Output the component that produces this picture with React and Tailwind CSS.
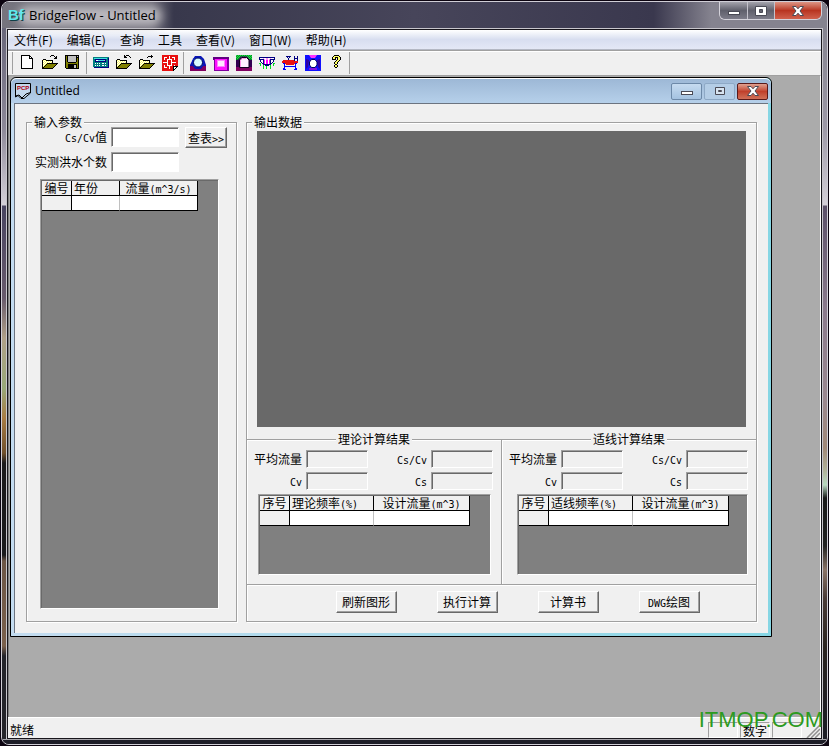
const PALETTE = {
  k: '#000000', w: '#ffffff', y: '#ffff66', o: '#808000', g: '#c0c0c0', t: '#008080',
  c: '#40e0e0', r: '#e81010', b: '#0000ff', n: '#000080', m: '#ff00ff', p: '#800060', l: '#00d820', h: '#ff90ff',
};

const FOLDER = [
  '.kkk............',
  'kywykkkkkkk.....',
  'kwywywywywk.....',
  'kywywywywyk.....',
  'kwywykkkkkkkkkkk',
  'kywykoooooooook.',
  'kwykoooooooook..',
  'kykoooooooook...',
  'kkoooooooook....',
  'kkkkkkkkkkk.....',
];

const NEW_ART = [
  '..kkkkkkkkk.....',
  '..kwwwwwwwkk....',
  '..kwwwwwwwkwk...',
  '..kwwwwwwwkkkk..',
  '..kwwwwwwwwwwk..',
  '..kwwwwwwwwwwk..',
  '..kwwwwwwwwwwk..',
  '..kwwwwwwwwwwk..',
  '..kwwwwwwwwwwk..',
  '..kwwwwwwwwwwk..',
  '..kwwwwwwwwwwk..',
  '..kwwwwwwwwwwk..',
  '..kwwwwwwwwwwk..',
  '..kkkkkkkkkkkk..',
];

const OPEN_ART = ['.........kkk....', '........k...k.k.', '.............kk.', '............kkk.', ...FOLDER];
const IMPORT_ART = ['........k.kkk...', '........kk...k..', '........kkk...k.', '................', ...FOLDER];
const EXPORT_ART = ['............k...', '.........kkkkk..', '........k...k...', '................', ...FOLDER];

const SAVE_ART = [
  'kkkkkkkkkkkkkk..',
  'kokggggggggkgk..',
  'kokggggggggkkk..',
  'kokggggggggkok..',
  'kokggggggggkok..',
  'kokggggggggkok..',
  'kokggggggggkok..',
  'kookkkkkkkkook..',
  'kooooooooooook..',
  'kookkkkkkkkkok..',
  'kookkkkkkggkok..',
  'kookkkkkkggkok..',
  'kookkkkkkggkok..',
  '.kkkkkkkkkkkkk..',
];

const CALC_ART = [
  '................',
  '................',
  'tttttttttttttttt',
  'tccccccccccccctn',
  'ttnnnnnnnnnnnttn',
  'ttnwwccccccgnttn',
  'ttnnnnnnnnnnnttn',
  'tttttttttttttttn',
  'ttwtwtwttwwtwttn',
  'tttttttttttttttn',
  'ttwtwtwttwwtwttn',
  'tttttttttttttttn',
  '.nnnnnnnnnnnnnnn',
];

const GRID_ART = [
  'rrrrrrrrrrrrrrrr',
  'rrrrrrrwrrrrrrrr',
  'rrwwwrrwrrwwwrrr',
  'rrwrrrrwrrrrwrrr',
  'rrwrrwwwwwrrwrrr',
  'rrrrrwrrrwrrrrrr',
  'rrrrrwrrrwrrrrrr',
  'rwwwwwrrrwwwwwrr',
  'rrrrrwrrrwrrrrrr',
  'rrrrrwrrrwrrrrrr',
  'rrwrrwwwwwrrwrrr',
  'rrwrrrrwrrrkkkkk',
  'rrwwwrrwrrrkwwk.',
  'rrrrrrrwrrrkwk..',
  'rrrrrrrrrrrkk...',
  'rrrrrrrrrrrk....',
];

const BRIDGE_ART = [
  '................',
  '................',
  'nnnnnnnnnnnnnnnn',
  'nwwwhwwhhwwhwwwn',
  'nnnnnhwhhwhnnnnn',
  '.nwwnmwmmwmnwwn.',
  '.nwwnmwmmwmnwwn.',
  '..nwnmwmmwmnwn..',
  'll.nnmwmmwmnn.ll',
  '.l..nnnnnnnn..l.',
  '.l..l.nnnn.l..l.',
  '....l..l...l....',
  '....l..l...l....',
  '....l..l...l....',
];

const DECK_ART = [
  '................',
  '....nnnnn...n..n',
  '.....n.n....n..n',
  '......n.....nnnn',
  '......n.....n..n',
  '.rrrrrrrrrrrn..n',
  'rrrrrrrrrrrrrrrr',
  'rrrrrrrrrrrrrrrr',
  '.bbrrrrrrrrrrbb.',
  '..b.rrrrrrrr.b..',
  '..b..........b..',
  '..bbbbbbbbbbbb..',
  '..b..........b..',
  '.bb..........bb.',
  '.bbb........bbb.',
];

const HELP_ART = [
  '......kkkkk.....',
  '.....kyyyyyk....',
  '....kyykkkyyk...',
  '....kyyk.kyyk...',
  '....kkkk.kyyk...',
  '........kyyk....',
  '.......kyyk.....',
  '......kyyk......',
  '......kyyk......',
  '.......kk.......',
  '......kyyk......',
  '......kyyk......',
  '.......kk.......',
];

function PixelIcon({ rows }) {
  const cells = [];
  rows.forEach((row, y) => {
    let x = 0;
    while (x < row.length) {
      const ch = row[x];
      let n = 1;
      while (row[x + n] === ch) n++;
      if (PALETTE[ch]) cells.push(<rect key={`${x}-${y}`} x={x} y={y} width={n} height="1" fill={PALETTE[ch]} />);
      x += n;
    }
  });
  return <svg viewBox="0 0 16 16" className="h-4 w-4" shapeRendering="crispEdges">{cells}</svg>;
}

function CircleIcon() {
  return (
    <svg viewBox="0 0 16 16" className="h-4 w-4">
      <path d="M0 16V10L3 4L5 1H11L14 4L16 10V16Z" fill="#1010b0" />
      <path d="M0 11H3L5 14H11L13 11H16V16H0Z" fill="#800060" />
      <circle cx="8" cy="7.5" r="6" fill="#0020c0" />
      <circle cx="8" cy="7.5" r="4.5" fill="#d8fcff" stroke="#000060" strokeWidth="1" />
    </svg>
  );
}

function BoxIcon() {
  return (
    <svg viewBox="0 0 16 16" className="h-4 w-4" shapeRendering="crispEdges">
      <rect x="0" y="2" width="16" height="3" fill="#600080" />
      <rect x="1" y="4" width="15" height="12" fill="#8000a0" />
      <rect x="2" y="4" width="12" height="11" fill="#ff10ff" />
      <rect x="4" y="5" width="8" height="7" fill="#ff80ff" />
      <rect x="5" y="6" width="6" height="5" fill="#ffe8ff" />
    </svg>
  );
}

function TunnelIcon() {
  return (
    <svg viewBox="0 0 16 16" className="h-4 w-4">
      <rect width="16" height="16" fill="#300050" />
      <rect width="16" height="5" fill="#009028" />
      <path d="M0 0.5H16M1 1.5H16M0 2.5H16M1 3.5H16" stroke="#20e040" strokeDasharray="1 1" />
      <path d="M0 5H2L5 1.5H11L14 5H16V12H0Z" fill="#300050" />
      <path d="M0 12H16V16H0Z" fill="#800060" />
      <path d="M3.5 12.5V5L6 2.5H10.5L13 5V12.5Z" fill="#fff0ff" stroke="#10001c" />
      <path d="M4.5 12V5.5L6.5 3.5H10" fill="none" stroke="#ff90e8" />
    </svg>
  );
}

function CulvertIcon() {
  return (
    <svg viewBox="0 0 16 16" className="h-4 w-4">
      <rect width="16" height="16" fill="#1010ff" />
      <path d="M4 0H12L10 3H6Z" fill="#ff30ff" />
      <path d="M1 4L4 5L3 12L1 14ZM15 4L12 5L13 12L15 14Z" fill="#3000a0" />
      <path d="M4 13H12V15H4Z" fill="#8010e0" />
      <path d="M6.5 4.5H10L12 7V10L10 12.5H6.5L4.5 10V7Z" fill="#fff" stroke="#000060" />
    </svg>
  );
}

const TOOLS = [
  [
    { label: '新建', icon: <PixelIcon rows={NEW_ART} /> },
    { label: '打开', icon: <PixelIcon rows={OPEN_ART} /> },
    { label: '保存', icon: <PixelIcon rows={SAVE_ART} /> },
  ],
  [
    { label: '计算', icon: <PixelIcon rows={CALC_ART} /> },
    { label: '导入', icon: <PixelIcon rows={IMPORT_ART} /> },
    { label: '导出', icon: <PixelIcon rows={EXPORT_ART} /> },
    { label: '绘图', icon: <PixelIcon rows={GRID_ART} /> },
  ],
  [
    { label: '圆管涵', icon: <CircleIcon /> },
    { label: '盖板涵', icon: <BoxIcon /> },
    { label: '拱涵', icon: <TunnelIcon /> },
    { label: '桥梁', icon: <PixelIcon rows={BRIDGE_ART} /> },
    { label: '桥面', icon: <PixelIcon rows={DECK_ART} /> },
    { label: '箱涵', icon: <CulvertIcon /> },
    { label: '帮助', icon: <PixelIcon rows={HELP_ART} /> },
  ],
];

const MENUS = ['文件(F)', '编辑(E)', '查询', '工具', '查看(V)', '窗口(W)', '帮助(H)'];

function Glyph({ kind }) {
  return (
    <svg viewBox="0 0 14 12" className="h-3 w-3.5" fill="#fff" stroke="#4a4a55" strokeWidth="1">
      {kind === 'min' && <rect x="1.5" y="6.5" width="11" height="3" />}
      {kind === 'max' && <path fillRule="evenodd" d="M1.5 1.5H12.5V10.5H1.5ZM5.5 4.5V7.5H8.5V4.5Z" />}
      {kind === 'restore' && <path fill="#d8e4f0" fillRule="evenodd" d="M2.5 2.5H11.5V9.5H2.5ZM5.5 5.5V6.5H8.5V5.5Z" />}
      {kind === 'close' && <path d="M1.5 1.5H5L7 3.8L9 1.5H12.5L9 6L12.5 10.5H9L7 8.2L5 10.5H1.5L5 6Z" />}
    </svg>
  );
}

function Half({ children }) {
  return <span className="font-['DejaVu_Sans_Mono',monospace] text-[10px] leading-none">{children}</span>;
}

function Group({ title, nested, className = '', children }) {
  const edge = nested ? 'shadow-[inset_1px_1px_0_#fff]' : 'shadow-[1px_1px_0_#fff,inset_1px_1px_0_#fff]';
  return (
    <fieldset className={`min-w-0 border-[#a0a0a0] ${edge} ${className}`}>
      <legend className={`bg-[#f0f0f0] px-0.5 leading-[10px] ${nested ? 'mx-auto' : 'ml-[5px]'}`}>{title}</legend>
      {children}
    </fieldset>
  );
}

function Field({ id, label, readOnly, className = '' }) {
  return (
    <>
      <label htmlFor={id} className="pr-1 text-right whitespace-nowrap">{label}</label>
      <input
        id={id}
        type="text"
        readOnly={readOnly}
        className={`w-full min-w-0 border border-t-[#a0a0a0] border-r-white border-b-white border-l-[#a0a0a0] px-1 shadow-[inset_1px_1px_0_#696969] outline-none ${className}`}
      />
    </>
  );
}

function PushButton({ className = '', children }) {
  return (
    <button
      type="button"
      className={`border border-t-white border-r-[#696969] border-b-[#696969] border-l-white bg-[#f0f0f0] text-center whitespace-nowrap shadow-[inset_-1px_-1px_0_#a0a0a0] ${className}`}
    >
      {children}
    </button>
  );
}

function DataGrid({ columns, className = '' }) {
  return (
    <div className={`overflow-hidden border border-t-[#a0a0a0] border-r-white border-b-white border-l-[#a0a0a0] bg-[#808080] pt-px pl-px shadow-[inset_1px_1px_0_#696969] ${className}`}>
      <table className="table-fixed border-separate border-spacing-0">
        <thead>
          <tr>
            {columns.map((c, i) => (
              <th key={i} className={`h-[15px] border-r border-b border-black bg-[#f0f0f0] p-0 leading-[14px] font-normal whitespace-nowrap ${c.cls}`}>
                {c.title}
              </th>
            ))}
          </tr>
        </thead>
        <tbody>
          <tr>
            {columns.map((c, i) => (
              <td
                key={i}
                className={`h-[15px] border-r border-b border-b-black p-0 ${i === 0 ? 'bg-[#f0f0f0]' : 'bg-white'} ${i === 1 ? 'border-r-[#c0c0c0]' : 'border-r-black'}`}
              />
            ))}
          </tr>
        </tbody>
      </table>
    </div>
  );
}

function ResultGroup({ id, title, rate, className, gridClass }) {
  return (
    <Group title={title} nested className={`flex-1 border-t pb-[9px] ${className}`}>
      <div className="grid grid-cols-[59px_1fr_63px_1fr] items-center gap-y-1 pt-1.5 pr-2">
        <Field id={`${id}-q`} label="平均流量" readOnly className="h-[18px]" />
        <Field id={`${id}-cscv`} label={<Half>Cs/Cv</Half>} readOnly className="h-[18px]" />
        <Field id={`${id}-cv`} label={<Half>Cv</Half>} readOnly className="h-[18px]" />
        <Field id={`${id}-cs`} label={<Half>Cs</Half>} readOnly className="h-[18px]" />
      </div>
      <DataGrid
        className={`mt-1 h-[81px] ${gridClass}`}
        columns={[
          { title: '序号', cls: 'w-[30px]' },
          { title: <>{rate}<Half>(%)</Half></>, cls: 'w-[84px] pl-0.5 text-left' },
          { title: <>设计流量<Half>(m^3)</Half></>, cls: 'w-24' },
        ]}
      />
    </Group>
  );
}

function ChildWindow() {
  const btn = 'flex h-[17px] w-[31px] items-center justify-center rounded-xs border';
  return (
    <section className="mr-12 rounded-t-md border border-black bg-linear-to-r from-[#c4dcf0] to-[#86d6e4] px-[3px] pb-[3px]">
      <header className="-mx-[3px] flex h-[25px] items-center rounded-t-md border-t border-white bg-linear-to-b from-[#9db8d6] to-[#b6d0ea] px-[3px]">
        <svg viewBox="0 0 16 16" className="ml-px h-4 w-4">
          <path d="M0.5 0.5H15.5V10L9 15.5H6L3 12.5L0.5 14Z" fill="#c4d8ec" stroke="#000" />
          <path d="M0.5 13L4 12L7 15L11 11L15.5 9.5" fill="none" stroke="#000" />
          <text x="2" y="6.5" fontSize="6" fontWeight="700" fontFamily="Liberation Sans, sans-serif" fill="#b00010">PCP</text>
        </svg>
        <h2 className="ml-1 flex-1 font-['Open_Sans',sans-serif]">Untitled</h2>
        <div className="flex gap-0.5">
          <button type="button" aria-label="最小化" className={`${btn} border-[#6d89a8] bg-linear-to-b from-[#c6dbf0] to-[#a4c2e0]`}><Glyph kind="min" /></button>
          <button type="button" aria-label="最大化" className={`${btn} border-[#8ea9c6] bg-[#b4cde6]`}><Glyph kind="restore" /></button>
          <button type="button" aria-label="关闭" className={`${btn} border-[#5a1a1a] bg-linear-to-b from-[#e0a090] via-[#c0402c] to-[#d07058]`}><Glyph kind="close" /></button>
        </div>
      </header>

      <div className="flex gap-[9px] border-t border-l border-[#6c7480] bg-[#f0f0f0] pt-[13px] pr-[11px] pb-[11px] pl-[11px] leading-[14px]">
        <Group title="输入参数" className="flex w-[211px] shrink-0 flex-col border">
          <div className="grid grid-cols-[84px_68px] items-center">
            <Field id="ratio" label={<><Half>Cs/Cv</Half>值</>} className="h-5 bg-white" />
          </div>
          <PushButton className="-mt-5 ml-[158px] h-[21px] w-[42px]">查表<Half>&gt;&gt;</Half></PushButton>
          <div className="mt-1 grid grid-cols-[84px_68px] items-center">
            <Field id="count" label="实测洪水个数" className="h-5 bg-white" />
          </div>
          <DataGrid
            className="mt-[7px] mr-[17px] mb-3 ml-[13px] flex-1"
            columns={[
              { title: '编号', cls: 'w-[30px]' },
              { title: '年份', cls: 'w-12 pl-0.5 text-left' },
              { title: <>流量<Half>(m^3/s)</Half></>, cls: 'w-[78px]' },
            ]}
          />
        </Group>

        <Group title="输出数据" className="flex-1 border">
          <div role="img" aria-label="输出数据" className="mx-2.5 mt-1 mb-[7px] h-[296px] bg-[#696969]" />
          <div className="flex">
            <ResultGroup id="theory" title="理论计算结果" rate="理论频率" className="border-r" gridClass="mr-[10px] ml-[11px]" />
            <ResultGroup id="fit" title="适线计算结果" rate="适线频率" className="" gridClass="mr-[8px] ml-[15px]" />
          </div>
          <div className="flex justify-center gap-10 border-t border-[#a0a0a0] pt-1.5 pb-2 pl-8 shadow-[inset_0_1px_0_#fff]">
            <PushButton className="h-[22px] w-[61px]">刷新图形</PushButton>
            <PushButton className="h-[22px] w-[61px]">执行计算</PushButton>
            <PushButton className="h-[22px] w-[61px]">计算书</PushButton>
            <PushButton className="h-[22px] w-[61px]"><Half>DWG</Half>绘图</PushButton>
          </div>
        </Group>
      </div>
    </section>
  );
}

export default function App() {
  const capBtn = 'flex h-full items-center justify-center';
  const pane = 'h-4 w-[30px] border border-t-[#a0a0a0] border-r-white border-b-white border-l-[#a0a0a0] text-center';
  return (
    <div className="flex min-h-screen flex-col bg-[#0c0410] p-px font-['Noto_Sans_CJK_SC',sans-serif] text-[12px] text-black">
      <div className="relative flex flex-1 flex-col overflow-hidden rounded-lg border border-[#d0ced6] bg-[#1c1c24]">
        <header className="relative flex h-[26px] items-start bg-[linear-gradient(90deg,#76747e_0px,#6c6a76_150px,#38384c_172px,#47455a_50%,#3a384e_79%,#85838f_86%,#85838f_100%)]">
          <div className="absolute top-1 left-4 h-5 w-36 rounded-full bg-[#bab8be] blur-[5px]" />
          <div className="relative flex flex-1 items-center pt-1">
            <span aria-hidden="true" className="ml-1.5 w-[17px] font-['Liberation_Sans',sans-serif] text-[15px] leading-[18px] font-bold text-[#60e8ec] text-shadow-[1px_1px_0_#104048]">Bf</span>
            <h1 className="ml-1 font-['Open_Sans',sans-serif] text-[13px] leading-[18px]">BridgeFlow - Untitled</h1>
          </div>
          <div className="relative mr-[5px] flex h-[18px] overflow-hidden rounded-b-md border border-t-0 border-[#d4d2da]">
            <button type="button" aria-label="最小化" className={`${capBtn} w-7 border-r border-[#c4c2cc] bg-linear-to-b from-[#a4a3ac] via-[#60606c] to-[#7c7b88]`}><Glyph kind="min" /></button>
            <button type="button" aria-label="最大化" className={`${capBtn} w-[27px] border-r border-[#c4c2cc] bg-linear-to-b from-[#a4a3ac] via-[#60606c] to-[#7c7b88]`}><Glyph kind="max" /></button>
            <button type="button" aria-label="关闭" className={`${capBtn} w-[46px] bg-linear-to-b from-[#dc9484] via-[#b83420] to-[#d0604c]`}><Glyph kind="close" /></button>
          </div>
        </header>

        <div className="flex flex-1">
          <div className="w-1 bg-[linear-gradient(#68667a_0px,#8c8898_100px,#d4d0d8_177px,#484460_178px,#685a6c_270px,#b0a088_310px,#98a878_360px,#a87c44_390px,#70502c_425px,#1c1a1c_435px,#1a1a1c_527px,#6c5646_533px,#7a604c_618px,#24242a_628px)]" />
          <div className="flex min-w-0 flex-1 flex-col border-x border-t border-[#c8c6cc]">
            <div className="flex flex-1 flex-col border border-[#18161c]">
              <nav className="flex h-5 items-center gap-3.5 border-b border-[#b4b8c4] bg-linear-to-b from-white via-[#d8def0] to-[#e4e8f6] pl-1.5">
                {MENUS.map(m => (
                  <button key={m} type="button" className="leading-[18px] whitespace-nowrap">{m}</button>
                ))}
              </nav>

              <div role="toolbar" aria-label="工具栏" className="flex h-[25px] items-center border-t border-[#a0a0a0] bg-[#f0f0f0] pl-1 shadow-[inset_0_1px_0_#fff]">
                {TOOLS.map((group, i) => (
                  <div key={i} className="flex h-[22px] items-center border-l border-[#a0a0a0] px-[2px] last:border-r">
                    {group.map(t => (
                      <button key={t.label} type="button" aria-label={t.label} title={t.label} className="flex h-[22px] w-[23px] items-center justify-center">
                        {t.icon}
                      </button>
                    ))}
                  </div>
                ))}
              </div>

              <main className="flex-1 border-t border-r border-l border-t-[#a0a0a0] border-r-white border-l-[#808080] bg-[#ababab] pt-px pl-px">
                <ChildWindow />
              </main>

              <footer className="flex h-[21px] items-end border-t border-white bg-[#f0f0f0] pl-0.5 leading-[16px]">
                <span className="flex-1">就绪</span>
                <div className="flex gap-0.5">
                  <span className={pane} />
                  <span className={pane}>数字</span>
                  <span className={pane} />
                </div>
                <svg viewBox="0 0 14 14" className="mr-px ml-1 h-3.5 w-3.5" stroke="#909090" strokeWidth="1.5">
                  <path d="M1 14L14 1M5 14L14 5M9 14L14 9" />
                </svg>
              </footer>
            </div>
          </div>
          <div className="w-1 bg-[linear-gradient(#85838f_0px,#9c98a6_100px,#d4d0d8_177px,#5a5068_178px,#8a7a8c_280px,#9a8890_370px,#a08878_420px,#b0b098_442px,#b8d8c0_457px,#181818_470px,#222222_518px,#8a7468_542px,#4a3c38_570px,#2a2420_620px,#1c1c24_700px)]" />
        </div>
        <div className="h-[5px] border-t border-[#a8a6ac] bg-[#1c1c26]" />

        <div className="pointer-events-none absolute right-1 bottom-3 font-['Liberation_Sans',sans-serif] text-[22px] leading-6 text-[#2c9a20]">
          ITMOP.COM
        </div>
      </div>
    </div>
  );
}
